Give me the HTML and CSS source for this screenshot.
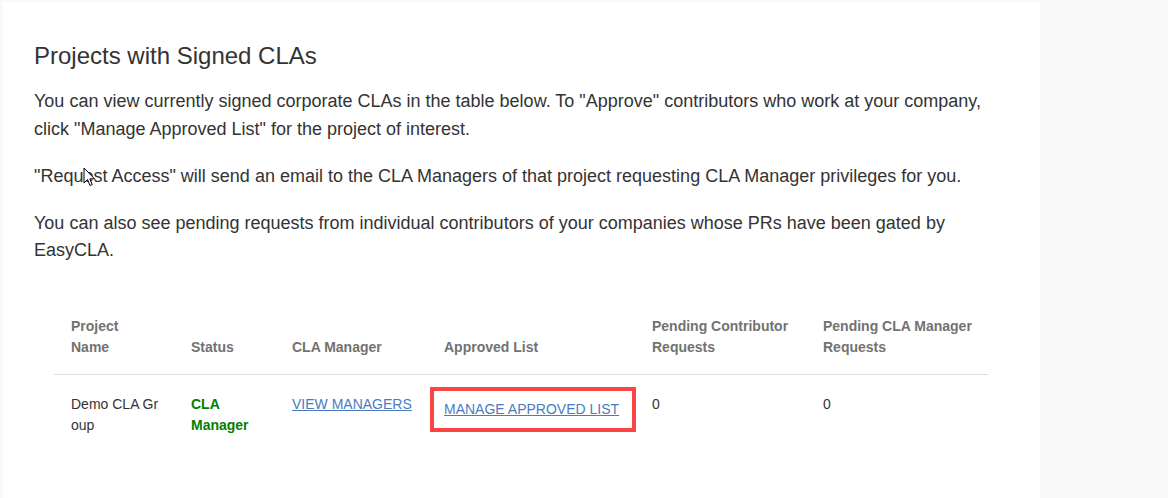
FILE: index.html
```html
<!DOCTYPE html>
<html lang="en">
<head>
<meta charset="utf-8">
<title>Projects with Signed CLAs</title>
<link rel="stylesheet" href="styles.css">
</head>
<body>
<main class="card">
  <h2 class="title">Projects with Signed CLAs</h2>
  <p class="text">You can view currently signed corporate CLAs in the table below. To "Approve" contributors who work at your company, click "Manage Approved List" for the project of interest.</p>
  <p class="text cursor-host">"Request Access" will send an email to the CLA Managers of that project requesting CLA Manager privileges for you.<svg class="cursor" width="13" height="20" viewBox="0 0 13 20"><path d="M1 1 L1 16 L4.5 12.5 L7 18.5 L9.2 17.6 L6.8 11.8 L11.5 11.8 Z" fill="#fff" stroke="#000" stroke-width="1" stroke-linejoin="miter"/></svg></p>
  <p class="text">You can also see pending requests from individual contributors of your companies whose PRs have been gated by EasyCLA.</p>

  <table class="projects">
    <colgroup>
      <col class="c1"><col class="c2"><col class="c3"><col class="c4"><col class="c5"><col class="c6">
    </colgroup>
    <thead>
      <tr>
        <th>Project Name</th>
        <th>Status</th>
        <th>CLA Manager</th>
        <th>Approved List</th>
        <th>Pending Contributor Requests</th>
        <th>Pending CLA Manager Requests</th>
      </tr>
    </thead>
    <tbody>
      <tr>
        <td class="name">Demo CLA Group</td>
        <td class="status">CLA Manager</td>
        <td><a class="link" href="#">VIEW MANAGERS</a></td>
        <td><span class="marked"><a class="link" href="#">MANAGE APPROVED LIST</a></span></td>
        <td>0</td>
        <td>0</td>
      </tr>
    </tbody>
  </table>
</main>
</body>
</html>
```

FILE: styles.css
```css
html, body {
  margin: 0;
  padding: 0;
}

body {
  background: #f9f9f9;
  font-family: "Liberation Sans", Arial, sans-serif;
  color: #333;
  padding: 2px 0 0 3px;
}

.card {
  width: 975px;
  height: 434px;
  background: #fff;
  padding: 40px 31px 22px 31px;
}

.title {
  margin: 0 0 18px 0;
  font-size: 24px;
  font-weight: normal;
  line-height: 28px;
  color: #333;
}

.text {
  margin: 0 0 19.5px 0;
  font-size: 18px;
  line-height: 27.5px;
}

.cursor-host {
  position: relative;
}

.cursor {
  position: absolute;
  left: 49px;
  top: 4px;
}

.projects {
  margin: 51px 20px 0 20px;
  width: 934px;
  border-collapse: collapse;
  table-layout: fixed;
  font-size: 14px;
  line-height: 21px;
}

.c1 { width: 120px; }
.c2 { width: 101px; }
.c3 { width: 152px; }
.c4 { width: 208px; }
.c5 { width: 171px; }
.c6 { width: 182px; }

.projects th {
  text-align: left;
  vertical-align: bottom;
  font-weight: bold;
  color: #727272;
  padding: 0 14px 16px 17px;
  border-bottom: 1px solid #dedede;
}

.projects td {
  vertical-align: top;
  padding: 19px 14px 0 17px;
  color: #333;
}

.projects td.name {
  word-break: break-all;
}

.projects td.status {
  color: #008000;
  font-weight: bold;
}

.link {
  color: #4a7bc0;
  text-decoration: underline;
}

.marked {
  position: relative;
  display: inline-block;
  margin-top: 5px;
}

.marked::after {
  content: "";
  position: absolute;
  left: -14px;
  right: -17px;
  top: -12px;
  bottom: -12px;
  border: 4px solid #fb4444;
}
```
